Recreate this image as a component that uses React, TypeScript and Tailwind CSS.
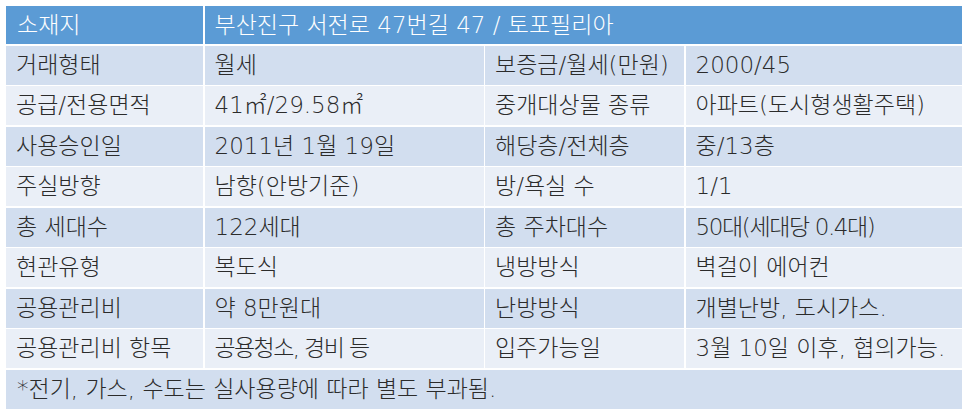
const rows: [string, string, string, string][] = [
  ["거래형태", "월세", "보증금/월세(만원)", "2000/45"],
  ["공급/전용면적", "41㎡/29.58㎡", "중개대상물 종류", "아파트(도시형생활주택)"],
  ["사용승인일", "2011년 1월 19일", "해당층/전체층", "중/13층"],
  ["주실방향", "남향(안방기준)", "방/욕실 수", "1/1"],
  ["총 세대수", "122세대", "총 주차대수", "50대(세대당 0.4대)"],
  ["현관유형", "복도식", "냉방방식", "벽걸이 에어컨"],
  ["공용관리비", "약 8만원대", "난방방식", "개별난방, 도시가스."],
  ["공용관리비 항목", "공용청소, 경비 등", "입주가능일", "3월 10일 이후, 협의가능."],
];

// values that are squeezed in the original slide
const tight: Record<string, string> = {
  "50대(세대당 0.4대)": "tracking-[-0.06em]",
  "공용청소, 경비 등": "tracking-[-0.07em]",
};

function Cell({ text, bg }: { text: string; bg: string }) {
  return (
    <div className={`${bg} flex items-center pl-[10px] h-[39px] whitespace-nowrap ${tight[text] ?? ""}`}>
      {text}
    </div>
  );
}

export default function App() {
  return (
    <div className="w-[966px] h-[415px] bg-white pt-[6px] pl-[6px]">
      <div
        className="grid grid-cols-[197px_279px_199px_276px] gap-[1.5px] bg-white text-[23px] font-light text-[#2b2b2b] leading-none"
        style={{ fontFamily: '"DejaVu Sans", "Noto Sans CJK KR", sans-serif' }}
      >
        <div className="bg-[#5b9bd5] text-white flex items-center pl-[11px] h-[38px]">소재지</div>
        <div className="col-span-3 bg-[#5b9bd5] text-white flex items-center pl-[10px] h-[38px]">
          부산진구 서전로 47번길 47 / 토포필리아
        </div>
        {rows.map((r, i) => {
          const bg = i % 2 === 0 ? "bg-[#d2deef]" : "bg-[#eaeff7]";
          return r.map((t, j) => <Cell key={`${i}-${j}`} text={t} bg={bg} />);
        })}
        <div className="col-span-4 bg-[#d2deef] flex items-center pl-[11px] h-[39px]">
          *전기, 가스, 수도는 실사용량에 따라 별도 부과됨.
        </div>
      </div>
    </div>
  );
}
